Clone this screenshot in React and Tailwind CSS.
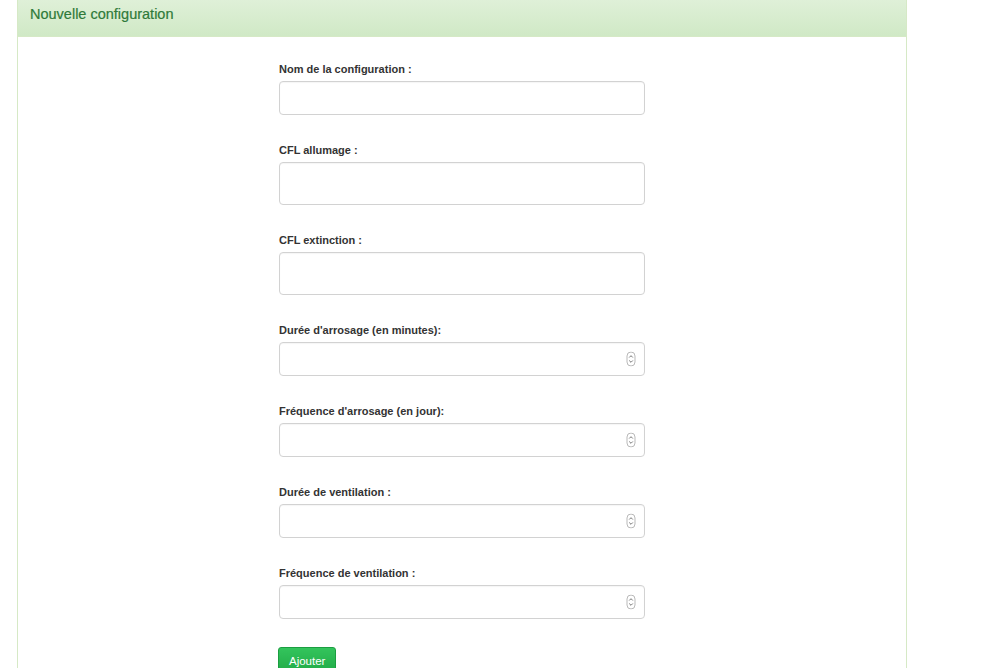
import React from "react";

const fields = [
  { id: "nom", label: "Nom de la configuration :", kind: "text" },
  { id: "cfl_on", label: "CFL allumage :", kind: "area" },
  { id: "cfl_off", label: "CFL extinction :", kind: "area" },
  { id: "arrosage_duree", label: "Durée d'arrosage (en minutes):", kind: "number" },
  { id: "arrosage_freq", label: "Fréquence d'arrosage (en jour):", kind: "number" },
  { id: "ventilation_duree", label: "Durée de ventilation :", kind: "number" },
  { id: "ventilation_freq", label: "Fréquence de ventilation :", kind: "number" },
];

function Spinner() {
  return (
    <svg
      width="10"
      height="15"
      viewBox="0 0 10 15"
      className="absolute right-[9px] top-1/2 -translate-y-1/2 pointer-events-none"
    >
      <rect x="1" y="0.5" width="8" height="14" rx="4" fill="#fff" stroke="#b9b9b9" strokeWidth="1" />
      <path d="M3.2 6 L5 4.2 L6.8 6" fill="none" stroke="#777" strokeWidth="1" />
      <path d="M3.2 9 L5 10.8 L6.8 9" fill="none" stroke="#777" strokeWidth="1" />
    </svg>
  );
}

function Field({ field }) {
  const base =
    "block w-full rounded-[4px] border border-[#d2d2d2] bg-white px-[10px] text-[12px] text-[#555] shadow-[inset_0_1px_1px_rgba(0,0,0,0.04)] outline-none";
  return (
    <div className="mb-[28px]">
      <label
        htmlFor={field.id}
        className="block mb-[5px] text-[11px] leading-[14px] font-bold text-[#333]"
      >
        {field.label}
      </label>
      {field.kind === "area" ? (
        <textarea id={field.id} rows={1} className={base + " h-[43px] resize-none py-[6px]"} />
      ) : (
        <div className="relative">
          <input id={field.id} type="text" className={base + " h-[34px]"} />
          {field.kind === "number" && <Spinner />}
        </div>
      )}
    </div>
  );
}

export default function App() {
  return (
    <div className="min-h-screen bg-white font-['Liberation_Sans',Arial,sans-serif]">
      <div className="ml-[17px] w-[890px] border-x border-[#d6e9c6] bg-white">
        {/* Panel heading */}
        <div className="h-[37px] border-b border-[#d6e9c6] bg-gradient-to-b from-[#dff0d8] to-[#d0e9c6] px-[12px] pt-[4px]">
          <h3 className="text-[14.5px] leading-[20px] text-[#2f7a3a] [-webkit-text-stroke:0.2px_#2f7a3a]">
            Nouvelle configuration
          </h3>
        </div>

        {/* Panel body */}
        <div className="pt-[25px] pb-[40px]">
          <form className="mx-auto w-[366px]" onSubmit={(e) => e.preventDefault()}>
            {fields.map((f) => (
              <Field key={f.id} field={f} />
            ))}
            <button
              type="submit"
              className="-ml-[1px] rounded-[3px] border border-[#1b9e40] bg-gradient-to-b from-[#33c45c] to-[#1fa845] px-[10px] pt-[6px] pb-[7px] text-[11.5px] leading-[14px] text-white"
            >
              Ajouter
            </button>
          </form>
        </div>
      </div>
    </div>
  );
}
